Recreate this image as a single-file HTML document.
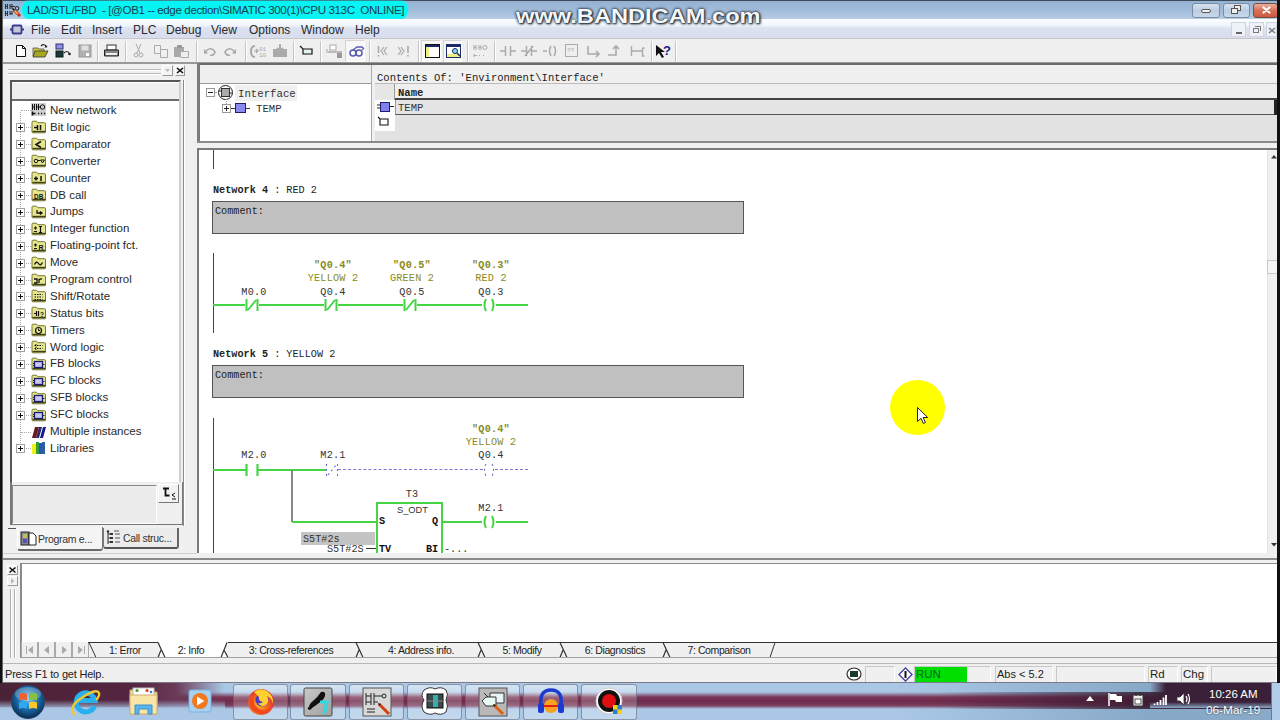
<!DOCTYPE html>
<html><head><meta charset="utf-8"><style>
*{box-sizing:border-box;margin:0;padding:0}
html,body{width:1280px;height:720px;overflow:hidden;background:#f0f0f0;font-family:"Liberation Sans",sans-serif;position:relative}
.a{position:absolute}
.m{font-family:"Liberation Mono",monospace}
.s{font-family:"Liberation Sans",sans-serif;white-space:pre}
.ti{position:absolute;left:50px;font-size:11.5px;color:#222;white-space:pre}
.pl{position:absolute;left:16px;width:9px;height:9px;border:1px solid #999;background:#fff}
.pl:before{content:"";position:absolute;left:1px;top:3px;width:5px;height:1px;background:#000}
.pl:after{content:"";position:absolute;left:3px;top:1px;width:1px;height:5px;background:#000}
.dt{position:absolute;border-top:1px dotted #999}
.nt{position:absolute;font-family:"Liberation Mono",monospace;font-size:10px;color:#222;white-space:pre}
.sy{position:absolute;font-family:"Liberation Mono",monospace;font-size:10px;color:#8c8c1c;white-space:pre;text-align:center;width:80px}
.g{position:absolute;background:#30e030}
.tab{position:absolute;font-size:11px;color:#222;white-space:pre;text-align:center}
svg{position:absolute;overflow:visible}
</style></head><body>
<div class="a" style="left:3px;top:0px;width:1274px;height:19px;background:linear-gradient(#93b0d0,#a4bedc 60%,#b8cce4)"></div>
<div class="a" style="left:3px;top:0px;width:1274px;height:1px;background:#3a4a5a"></div>
<div class="a" style="left:22px;top:1px;width:386px;height:18px;background:#08f4f4;border-radius:8px;box-shadow:0 0 3px #3ff"></div>
<svg style="left:4px;top:2px" width="18" height="16" viewBox="0 0 18 16"><path d="M1.5 2v5M3.5 2v5M1.5 4.5h2M6 2v5M8 2v5M6 4.5h2M8 4.5h3M13 4.5a1.8 1.8 0 1 0 .01 0M1.5 9v5M3.5 9v5M1.5 11.5h2M6 9v4M8 9v4M6 11.5h2" fill="none" stroke="#333" stroke-width="1.1"/><path d="M10 8l6 6" stroke="#c03020" stroke-width="3"/><path d="M10 8l4 4" stroke="#f0c040" stroke-width="1.5"/><path d="M8.5 6.5l2 2" stroke="#111" stroke-width="1.5"/></svg>
<div class="a s" style="left:27px;top:3px;font-size:11.6px;letter-spacing:-0.38px;color:#14404e">LAD/STL/FBD  - [@OB1 -- edge dection\SIMATIC 300(1)\CPU 313C  ONLINE]</div>
<div class="a" style="left:1192px;top:3px;width:28px;height:15px;border:1px solid #7a8ca4;border-radius:3px;background:linear-gradient(#d6e2ef,#bccde2 50%,#c8d9ea)"></div>
<div class="a" style="left:1201px;top:9px;width:10px;height:4px;border:1px solid #555;background:#f4f4f4;border-radius:2px"></div>
<div class="a" style="left:1223px;top:3px;width:27px;height:15px;border:1px solid #7a8ca4;border-radius:3px;background:linear-gradient(#d6e2ef,#bccde2 50%,#c8d9ea)"></div>
<div class="a" style="left:1234px;top:5px;width:7px;height:6px;border:1px solid #555;background:#eee"></div>
<div class="a" style="left:1231px;top:8px;width:7px;height:6px;border:1px solid #555;background:#eee"></div>
<div class="a" style="left:1253px;top:3px;width:25px;height:15px;border:1px solid #7a4a40;border-radius:3px;background:linear-gradient(#e8b0a0,#d87058 50%,#cc5a40)"></div>
<svg style="left:1262px;top:6px" width="9" height="8" viewBox="0 0 9 8"><path d="M1.5 1.5l6 5M7.5 1.5l-6 5" stroke="#fff" stroke-width="2.2" stroke-linecap="round"/></svg>
<div class="a" style="left:3px;top:19px;width:1274px;height:20px;background:linear-gradient(#fafcff,#f2f6fd 30%,#dde2f0 45%,#d8ddee 90%,#e0e2ea)"></div>
<div class="a" style="left:3px;top:38px;width:1274px;height:1px;background:#c4c6cc"></div>
<svg style="left:10px;top:24px" width="14" height="11" viewBox="0 0 14 11"><rect x="2.5" y="1.5" width="9" height="8" rx="1" fill="#c4c8d4" stroke="#3a3a90" stroke-width="1.8"/><path d="M0 5.5h2.5M11.5 5.5h2.5" stroke="#3a3a90" stroke-width="2"/></svg>
<div class="a s" style="left:31px;top:23px;font-size:12px;color:#2a2a2a">File</div>
<div class="a s" style="left:61px;top:23px;font-size:12px;color:#2a2a2a">Edit</div>
<div class="a s" style="left:92px;top:23px;font-size:12px;color:#2a2a2a">Insert</div>
<div class="a s" style="left:133px;top:23px;font-size:12px;color:#2a2a2a">PLC</div>
<div class="a s" style="left:166px;top:23px;font-size:12px;color:#2a2a2a">Debug</div>
<div class="a s" style="left:211px;top:23px;font-size:12px;color:#2a2a2a">View</div>
<div class="a s" style="left:249px;top:23px;font-size:12px;color:#2a2a2a">Options</div>
<div class="a s" style="left:301px;top:23px;font-size:12px;color:#2a2a2a">Window</div>
<div class="a s" style="left:355px;top:23px;font-size:12px;color:#2a2a2a">Help</div>
<div class="a" style="left:1231px;top:22px;width:15px;height:15px;background:#eef2f8;border:1px solid #d0d6e0"></div>
<div class="a" style="left:1236px;top:32px;width:6px;height:2px;background:#666"></div>
<div class="a" style="left:1249px;top:22px;width:15px;height:15px;background:#eef2f8;border:1px solid #d0d6e0"></div>
<div class="a" style="left:1253px;top:28px;width:6px;height:5px;border:1px solid #777"></div>
<div class="a" style="left:1255px;top:26px;width:6px;height:5px;border-top:1px solid #777;border-right:1px solid #777"></div>
<div class="a" style="left:1266px;top:22px;width:11px;height:15px;background:#eef2f8;border:1px solid #d0d6e0"></div>
<svg style="left:1268px;top:27px" width="8" height="7" viewBox="0 0 8 7"><path d="M1 1l6 5M7 1l-6 5" stroke="#777" stroke-width="1.4"/></svg>
<div class="a" style="left:3px;top:39px;width:1274px;height:23px;background:#efefef"></div>
<div class="a" style="left:3px;top:62px;width:1274px;height:2px;background:#9a9a9a"></div>
<div class="a" style="left:97px;top:41px;width:1px;height:21px;background:#c4c4c4;box-shadow:1px 0 0 #fff"></div>
<div class="a" style="left:125px;top:41px;width:1px;height:21px;background:#c4c4c4;box-shadow:1px 0 0 #fff"></div>
<div class="a" style="left:196px;top:41px;width:1px;height:21px;background:#c4c4c4;box-shadow:1px 0 0 #fff"></div>
<div class="a" style="left:245px;top:41px;width:1px;height:21px;background:#c4c4c4;box-shadow:1px 0 0 #fff"></div>
<div class="a" style="left:293px;top:41px;width:1px;height:21px;background:#c4c4c4;box-shadow:1px 0 0 #fff"></div>
<div class="a" style="left:320px;top:41px;width:1px;height:21px;background:#c4c4c4;box-shadow:1px 0 0 #fff"></div>
<div class="a" style="left:369px;top:41px;width:1px;height:21px;background:#c4c4c4;box-shadow:1px 0 0 #fff"></div>
<div class="a" style="left:418px;top:41px;width:1px;height:21px;background:#c4c4c4;box-shadow:1px 0 0 #fff"></div>
<div class="a" style="left:467px;top:41px;width:1px;height:21px;background:#c4c4c4;box-shadow:1px 0 0 #fff"></div>
<div class="a" style="left:494px;top:41px;width:1px;height:21px;background:#c4c4c4;box-shadow:1px 0 0 #fff"></div>
<div class="a" style="left:651px;top:41px;width:1px;height:21px;background:#c4c4c4;box-shadow:1px 0 0 #fff"></div>
<div class="a" style="left:675px;top:41px;width:1px;height:21px;background:#c4c4c4;box-shadow:1px 0 0 #fff"></div>
<div class="a" style="left:345px;top:40px;width:20px;height:22px;background:#f7f7f7;border:1px solid #d4d4d4;border-right-color:#fff;border-bottom-color:#fff"></div>
<div class="a" style="left:421px;top:40px;width:20px;height:22px;background:#f7f7f7;border:1px solid #d4d4d4;border-right-color:#fff;border-bottom-color:#fff"></div>
<div class="a" style="left:443px;top:40px;width:19px;height:22px;background:#f7f7f7;border:1px solid #d4d4d4;border-right-color:#fff;border-bottom-color:#fff"></div>
<svg style="left:15px;top:44px" width="12" height="14" viewBox="0 0 12 14"><path d="M1.5 1.5h6l3 3v8h-9z" fill="#fff" stroke="#111"/><path d="M7.5 1.5v3h3" fill="none" stroke="#111"/></svg>
<svg style="left:32px;top:43px" width="17" height="15" viewBox="0 0 17 15"><path d="M1 5h5l1 1h5v7H1z" fill="#c8c840" stroke="#555" stroke-width="0.8"/><path d="M3 8h13l-3 6H1z" fill="#a8a820" stroke="#333" stroke-width="0.8"/><path d="M9 3q3-3 6 1" fill="none" stroke="#222" stroke-width="1.2"/><path d="M14 2l1 2.5-2.5 0" fill="#222"/></svg>
<svg style="left:55px;top:43px" width="16" height="15" viewBox="0 0 16 15"><rect x="1" y="1" width="7" height="5" fill="#9090e0" stroke="#303070"/><rect x="1" y="8" width="7" height="6" fill="#1a3a3a" stroke="#0a1a1a"/><path d="M9 10q3-3 5 0" fill="none" stroke="#222" stroke-width="1.2"/><circle cx="14.5" cy="11" r="1.3" fill="#222"/></svg>
<svg style="left:78px;top:44px" width="14" height="14" viewBox="0 0 14 14"><rect x="1" y="1" width="12" height="12" fill="#b0b0b0" stroke="#999"/><rect x="3.5" y="1.5" width="7" height="5" fill="#e0e0e0"/><rect x="8" y="9" width="3" height="3" fill="#fff"/></svg>
<svg style="left:103px;top:44px" width="17" height="14" viewBox="0 0 17 14"><rect x="4" y="1" width="9" height="5" fill="#fff" stroke="#333"/><path d="M1.5 6h14v6h-14z" fill="#888" stroke="#222"/><rect x="3" y="9" width="11" height="2" fill="#eee"/></svg>
<svg style="left:133px;top:43px" width="11" height="15" viewBox="0 0 11 15"><path d="M3 1l4 9M8 1l-4 9" stroke="#aaa" stroke-width="1"/><circle cx="3" cy="12" r="2" fill="none" stroke="#aaa"/><circle cx="8" cy="12" r="2" fill="none" stroke="#aaa"/></svg>
<svg style="left:153px;top:44px" width="16" height="14" viewBox="0 0 16 14"><path d="M1.5 1.5h6v8h-6z" fill="#f0f0f0" stroke="#aaa"/><path d="M7.5 5.5h7v8h-7z" fill="#f0f0f0" stroke="#aaa"/></svg>
<svg style="left:173px;top:44px" width="17" height="15" viewBox="0 0 17 15"><path d="M1 3h10v10H1z" fill="#a8a8a8"/><rect x="4" y="1" width="5" height="3" fill="#999"/><path d="M7.5 7.5h8v6h-8z" fill="#eee" stroke="#aaa"/></svg>
<svg style="left:203px;top:47px" width="13" height="9" viewBox="0 0 13 9"><path d="M3 4q5-5 9 1q-1 4-5 3" fill="none" stroke="#aaa" stroke-width="1.6"/><path d="M1 2l0 5 4-1z" fill="#aaa"/></svg>
<svg style="left:224px;top:47px" width="13" height="9" viewBox="0 0 13 9"><path d="M10 4q-5-5-9 1q1 4 5 3" fill="none" stroke="#aaa" stroke-width="1.6"/><path d="M12 2l0 5-4-1z" fill="#aaa"/></svg>
<svg style="left:250px;top:44px" width="17" height="14" viewBox="0 0 17 14"><path d="M5 2q-4 0-4 5.5q0 5.5 4 5.5" fill="none" stroke="#aaa" stroke-width="2"/><path d="M4 7h4M6 5l2 2-2 2" stroke="#aaa" stroke-width="1.2" fill="none"/><text x="9" y="6.5" font-size="6" fill="#aaa" font-family="Liberation Mono">01</text><text x="9" y="13" font-size="6" fill="#aaa" font-family="Liberation Mono">10</text></svg>
<svg style="left:272px;top:43px" width="16" height="15" viewBox="0 0 16 15"><path d="M1 6h4l3 3 3-3h4v8H1z" fill="#aaa"/><path d="M8 1v6M5 5l3 3 3-3" stroke="#aaa" stroke-width="2" fill="none"/></svg>
<svg style="left:299px;top:45px" width="14" height="10" viewBox="0 0 14 10"><path d="M1 1l3 3h9v5H4V4" fill="#e8f4f4" stroke="#111" stroke-width="1.2"/></svg>
<svg style="left:327px;top:44px" width="16" height="15" viewBox="0 0 16 15"><rect x="3" y="1" width="6" height="5" fill="#fff" stroke="#aaa"/><path d="M1 8h14" stroke="#aaa" stroke-width="1.5"/><rect x="10" y="9" width="5" height="5" fill="#999"/><path d="M0 5v4" stroke="#aaa"/></svg>
<svg style="left:349px;top:46px" width="16" height="11" viewBox="0 0 16 11"><circle cx="4" cy="7" r="3" fill="none" stroke="#5858b0" stroke-width="1.5"/><circle cx="10" cy="7" r="3" fill="none" stroke="#5858b0" stroke-width="1.5"/><path d="M4 4l4-3 5 0 2 2M13 4l2-2" fill="none" stroke="#5858b0" stroke-width="1.3"/></svg>
<svg style="left:377px;top:45px" width="11" height="12" viewBox="0 0 11 12"><path d="M1.5 1v7M1.5 10v1.5" stroke="#aaa" stroke-width="1.6"/><path d="M7 2l-3 4 3 4M10 2l-3 4 3 4" fill="none" stroke="#aaa" stroke-width="1.2"/></svg>
<svg style="left:396px;top:45px" width="14" height="12" viewBox="0 0 14 12"><path d="M12 1v7M12 10v1.5" stroke="#aaa" stroke-width="1.6"/><path d="M2 2l3 4-3 4M5 2l3 4-3 4" fill="none" stroke="#aaa" stroke-width="1.2"/></svg>
<svg style="left:425px;top:44px" width="16" height="15" viewBox="0 0 16 15"><rect x="0.5" y="0.5" width="14" height="13" fill="#fff" stroke="#111" stroke-width="1"/><rect x="1" y="1" width="13" height="2" fill="#1a2a6a"/><rect x="1" y="3" width="3" height="10" fill="#f0f080"/></svg>
<svg style="left:446px;top:44px" width="16" height="15" viewBox="0 0 16 15"><rect x="0.5" y="0.5" width="14" height="13" fill="#fff" stroke="#1a2a6a" stroke-width="1"/><rect x="1" y="1" width="13" height="2" fill="#1a2a6a"/><rect x="1" y="10" width="13" height="3" fill="#f0f080"/><circle cx="9" cy="7" r="2.5" fill="#80e0e8" stroke="#1a2a6a"/><path d="M11 9l3 3" stroke="#1a2a6a" stroke-width="1.5"/></svg>
<svg style="left:473px;top:44px" width="15" height="14" viewBox="0 0 15 14"><path d="M1 1v5M3 1v5M1 3.5h2M6 1v5M8 1v5M6 3.5h2M10 3.5a2 2 0 1 0 4 0a2 2 0 1 0 -4 0M1 10v3M1 11.5h3M6 11.5h1M10 11.5h1" fill="none" stroke="#aaa" stroke-width="1"/></svg>
<svg style="left:500px;top:45px" width="16" height="12" viewBox="0 0 16 12"><path d="M0 6h5M11 6h5M5.5 1v10M10.5 1v10" stroke="#aaa" stroke-width="1.5"/></svg>
<svg style="left:521px;top:45px" width="16" height="12" viewBox="0 0 16 12"><path d="M0 6h5M11 6h5M5.5 1v10M10.5 1v10M4 11l8-10" stroke="#aaa" stroke-width="1.5"/></svg>
<svg style="left:543px;top:45px" width="16" height="12" viewBox="0 0 16 12"><path d="M0 6h4" stroke="#aaa" stroke-width="1.5"/><path d="M8 1q-3 5 0 10M11 1q3 5 0 10" fill="none" stroke="#aaa" stroke-width="1.5"/></svg>
<svg style="left:565px;top:44px" width="14" height="14" viewBox="0 0 14 14"><rect x="0.5" y="0.5" width="12" height="12" fill="none" stroke="#aaa"/><text x="2" y="8" font-size="6" fill="#aaa" font-family="Liberation Mono">??</text></svg>
<svg style="left:586px;top:45px" width="15" height="12" viewBox="0 0 15 12"><path d="M2 1v8h11M10 6l3 3-3 3" fill="none" stroke="#aaa" stroke-width="1.6"/></svg>
<svg style="left:608px;top:45px" width="15" height="12" viewBox="0 0 15 12"><path d="M0 10h8v-8M5 4l3-3 3 3" fill="none" stroke="#aaa" stroke-width="1.6"/></svg>
<svg style="left:630px;top:45px" width="16" height="12" viewBox="0 0 16 12"><path d="M1.5 1v10M2 6h10M12.5 3v8h2M12.5 3h2" fill="none" stroke="#aaa" stroke-width="1.4"/></svg>
<svg style="left:655px;top:44px" width="20" height="15" viewBox="0 0 20 15"><path d="M1 1v11l3-3 3 5 2-1-3-5h4z" fill="#111"/><text x="8" y="11" font-size="13" font-weight="bold" fill="#1a1a8a" font-family="Liberation Sans">?</text></svg>
<div class="a" style="left:3px;top:64px;width:194px;height:494px;background:#f0f0f0"></div>
<div class="a" style="left:8px;top:69px;width:153px;height:2px;border-top:1px solid #b8b8b8;border-bottom:1px solid #fff"></div>
<div class="a" style="left:8px;top:73px;width:153px;height:2px;border-top:1px solid #b8b8b8;border-bottom:1px solid #fff"></div>
<div class="a" style="left:162px;top:65px;width:11px;height:11px;background:#f4f4f4;border:1px solid #fff;border-right-color:#999;border-bottom-color:#999"></div>
<svg style="left:165px;top:69px" width="6" height="4" viewBox="0 0 6 4"><path d="M0 0h5l-2.5 3z" fill="#bbb"/></svg>
<div class="a" style="left:175px;top:65px;width:10px;height:11px;background:#f4f4f4;border:1px solid #fff;border-right-color:#999;border-bottom-color:#999"></div>
<svg style="left:176px;top:67px" width="8" height="7" viewBox="0 0 8 7"><path d="M1 1l6 5M7 1l-6 5" stroke="#111" stroke-width="1.6"/></svg>
<div class="a" style="left:183px;top:80px;width:2px;height:446px;background:#8a8a8a;border-right:1px solid #fff"></div>
<div class="a" style="left:10px;top:80px;width:171px;height:403px;border:2px solid #555;border-right-color:#d0d0d0;border-bottom:none;background:#fff"></div>
<div class="a" style="left:12px;top:82px;width:167px;height:19px;background:#eeeeee;border-top:1px solid #fff"></div>
<div class="a" style="left:12px;top:99px;width:167px;height:2px;background:#6a6a6a"></div>
<div class="a" style="left:20px;top:112px;width:1px;height:337px;border-left:1px dotted #aaa"></div>
<div class="a s" style="left:50px;top:104.1px;font-size:11.5px;color:#2a2a2a">New network</div>
<div class="a" style="left:21px;top:110px;width:10px;height:1px;border-top:1px dotted #aaa"></div>
<svg style="left:31px;top:103px" width="16" height="14" viewBox="0 0 16 14"><rect x="0" y="0" width="15" height="13" fill="#cfcfcf"/><path d="M1.5 1v6M3.5 1v6M1.5 4h2M5.5 1v6M7.5 1v6M5.5 4h2M8 4h1.5" fill="none" stroke="#111" stroke-width="1"/><circle cx="11.5" cy="4" r="2.2" fill="none" stroke="#111"/><path d="M1.5 8.5v4M1.5 10.5h3" stroke="#111" stroke-width="1.6"/><path d="M7 10.5h1.2M10 10.5h1.2M13 10.5h1.2" stroke="#111" stroke-width="1.4"/></svg>
<div class="a s" style="left:50px;top:121.0px;font-size:11.5px;color:#2a2a2a">Bit logic</div>
<div class="a" style="left:21px;top:127px;width:10px;height:1px;border-top:1px dotted #aaa"></div>
<div class="a" style="left:16px;top:123px;width:9px;height:9px;border:1px solid #a0a0a0;background:#fff"></div>
<div class="a" style="left:18px;top:127px;width:5px;height:1px;background:#111"></div>
<div class="a" style="left:20px;top:125px;width:1px;height:5px;background:#111"></div>
<svg style="left:31px;top:120px" width="16" height="14" viewBox="0 0 16 14"><path d="M1 3.5V2.2q0-1 1-1h3.5l1.3 1.5h6.7q1 0 1 1V12q0 .8-.8.8H1.8q-.8 0-.8-.8z" fill="#e6e690" stroke="#6a6a20" stroke-width="0.9"/><path d="M1.5 11.5h13" stroke="#40401a" stroke-width="1.4"/><path d="M3 7.5h3M6.5 5v5M9.5 5v5" stroke="#111" stroke-width="1.5"/></svg>
<div class="a s" style="left:50px;top:137.9px;font-size:11.5px;color:#2a2a2a">Comparator</div>
<div class="a" style="left:21px;top:144px;width:10px;height:1px;border-top:1px dotted #aaa"></div>
<div class="a" style="left:16px;top:140px;width:9px;height:9px;border:1px solid #a0a0a0;background:#fff"></div>
<div class="a" style="left:18px;top:144px;width:5px;height:1px;background:#111"></div>
<div class="a" style="left:20px;top:142px;width:1px;height:5px;background:#111"></div>
<svg style="left:31px;top:137px" width="16" height="14" viewBox="0 0 16 14"><path d="M1 3.5V2.2q0-1 1-1h3.5l1.3 1.5h6.7q1 0 1 1V12q0 .8-.8.8H1.8q-.8 0-.8-.8z" fill="#e6e690" stroke="#6a6a20" stroke-width="0.9"/><path d="M1.5 11.5h13" stroke="#40401a" stroke-width="1.4"/><path d="M10 4.5L5 7.5l5 3" fill="none" stroke="#111" stroke-width="1.5"/></svg>
<div class="a s" style="left:50px;top:154.8px;font-size:11.5px;color:#2a2a2a">Converter</div>
<div class="a" style="left:21px;top:161px;width:10px;height:1px;border-top:1px dotted #aaa"></div>
<div class="a" style="left:16px;top:157px;width:9px;height:9px;border:1px solid #a0a0a0;background:#fff"></div>
<div class="a" style="left:18px;top:161px;width:5px;height:1px;background:#111"></div>
<div class="a" style="left:20px;top:159px;width:1px;height:5px;background:#111"></div>
<svg style="left:31px;top:154px" width="16" height="14" viewBox="0 0 16 14"><path d="M1 3.5V2.2q0-1 1-1h3.5l1.3 1.5h6.7q1 0 1 1V12q0 .8-.8.8H1.8q-.8 0-.8-.8z" fill="#e6e690" stroke="#6a6a20" stroke-width="0.9"/><path d="M1.5 11.5h13" stroke="#40401a" stroke-width="1.4"/><circle cx="5" cy="7" r="1.8" fill="none" stroke="#111"/><path d="M7 6.5h2M9.5 6l2 3 2-3z" stroke="#111" fill="none"/></svg>
<div class="a s" style="left:50px;top:171.6px;font-size:11.5px;color:#2a2a2a">Counter</div>
<div class="a" style="left:21px;top:178px;width:10px;height:1px;border-top:1px dotted #aaa"></div>
<div class="a" style="left:16px;top:174px;width:9px;height:9px;border:1px solid #a0a0a0;background:#fff"></div>
<div class="a" style="left:18px;top:178px;width:5px;height:1px;background:#111"></div>
<div class="a" style="left:20px;top:176px;width:1px;height:5px;background:#111"></div>
<svg style="left:31px;top:171px" width="16" height="14" viewBox="0 0 16 14"><path d="M1 3.5V2.2q0-1 1-1h3.5l1.3 1.5h6.7q1 0 1 1V12q0 .8-.8.8H1.8q-.8 0-.8-.8z" fill="#e6e690" stroke="#6a6a20" stroke-width="0.9"/><path d="M1.5 11.5h13" stroke="#40401a" stroke-width="1.4"/><path d="M3 7.5h4M5 5.5v4M10 5v5" stroke="#111" stroke-width="1.5"/></svg>
<div class="a s" style="left:50px;top:188.5px;font-size:11.5px;color:#2a2a2a">DB call</div>
<div class="a" style="left:21px;top:195px;width:10px;height:1px;border-top:1px dotted #aaa"></div>
<div class="a" style="left:16px;top:191px;width:9px;height:9px;border:1px solid #a0a0a0;background:#fff"></div>
<div class="a" style="left:18px;top:195px;width:5px;height:1px;background:#111"></div>
<div class="a" style="left:20px;top:193px;width:1px;height:5px;background:#111"></div>
<svg style="left:31px;top:188px" width="16" height="14" viewBox="0 0 16 14"><path d="M1 3.5V2.2q0-1 1-1h3.5l1.3 1.5h6.7q1 0 1 1V12q0 .8-.8.8H1.8q-.8 0-.8-.8z" fill="#e6e690" stroke="#6a6a20" stroke-width="0.9"/><path d="M1.5 11.5h13" stroke="#40401a" stroke-width="1.4"/><text x="3" y="10.5" font-size="6.5" font-weight="bold" font-family="Liberation Sans" fill="#111">DB</text></svg>
<div class="a s" style="left:50px;top:205.4px;font-size:11.5px;color:#2a2a2a">Jumps</div>
<div class="a" style="left:21px;top:212px;width:10px;height:1px;border-top:1px dotted #aaa"></div>
<div class="a" style="left:16px;top:208px;width:9px;height:9px;border:1px solid #a0a0a0;background:#fff"></div>
<div class="a" style="left:18px;top:212px;width:5px;height:1px;background:#111"></div>
<div class="a" style="left:20px;top:210px;width:1px;height:5px;background:#111"></div>
<svg style="left:31px;top:205px" width="16" height="14" viewBox="0 0 16 14"><path d="M1 3.5V2.2q0-1 1-1h3.5l1.3 1.5h6.7q1 0 1 1V12q0 .8-.8.8H1.8q-.8 0-.8-.8z" fill="#e6e690" stroke="#6a6a20" stroke-width="0.9"/><path d="M1.5 11.5h13" stroke="#40401a" stroke-width="1.4"/><path d="M6 5v3h5M9 6.5l2 1.5-2 1.5" fill="none" stroke="#111" stroke-width="1.3"/></svg>
<div class="a s" style="left:50px;top:222.3px;font-size:11.5px;color:#2a2a2a">Integer function</div>
<div class="a" style="left:21px;top:229px;width:10px;height:1px;border-top:1px dotted #aaa"></div>
<div class="a" style="left:16px;top:225px;width:9px;height:9px;border:1px solid #a0a0a0;background:#fff"></div>
<div class="a" style="left:18px;top:229px;width:5px;height:1px;background:#111"></div>
<div class="a" style="left:20px;top:227px;width:1px;height:5px;background:#111"></div>
<svg style="left:31px;top:222px" width="16" height="14" viewBox="0 0 16 14"><path d="M1 3.5V2.2q0-1 1-1h3.5l1.3 1.5h6.7q1 0 1 1V12q0 .8-.8.8H1.8q-.8 0-.8-.8z" fill="#e6e690" stroke="#6a6a20" stroke-width="0.9"/><path d="M1.5 11.5h13" stroke="#40401a" stroke-width="1.4"/><path d="M3 6h3M4.5 4.5v3M3 9.5h3M9.5 4.5v6M8 4.5h3M8 10.5h3" stroke="#111" stroke-width="1.2"/></svg>
<div class="a s" style="left:50px;top:239.2px;font-size:11.5px;color:#2a2a2a">Floating-point fct.</div>
<div class="a" style="left:21px;top:246px;width:10px;height:1px;border-top:1px dotted #aaa"></div>
<div class="a" style="left:16px;top:242px;width:9px;height:9px;border:1px solid #a0a0a0;background:#fff"></div>
<div class="a" style="left:18px;top:246px;width:5px;height:1px;background:#111"></div>
<div class="a" style="left:20px;top:244px;width:1px;height:5px;background:#111"></div>
<svg style="left:31px;top:239px" width="16" height="14" viewBox="0 0 16 14"><path d="M1 3.5V2.2q0-1 1-1h3.5l1.3 1.5h6.7q1 0 1 1V12q0 .8-.8.8H1.8q-.8 0-.8-.8z" fill="#e6e690" stroke="#6a6a20" stroke-width="0.9"/><path d="M1.5 11.5h13" stroke="#40401a" stroke-width="1.4"/><path d="M3 6h3M4.5 4.5v3M3 9.5h3" stroke="#111" stroke-width="1.2"/><text x="7.5" y="10.5" font-size="7" font-weight="bold" font-family="Liberation Sans" fill="#111">R</text></svg>
<div class="a s" style="left:50px;top:256.1px;font-size:11.5px;color:#2a2a2a">Move</div>
<div class="a" style="left:21px;top:263px;width:10px;height:1px;border-top:1px dotted #aaa"></div>
<div class="a" style="left:16px;top:259px;width:9px;height:9px;border:1px solid #a0a0a0;background:#fff"></div>
<div class="a" style="left:18px;top:263px;width:5px;height:1px;background:#111"></div>
<div class="a" style="left:20px;top:261px;width:1px;height:5px;background:#111"></div>
<svg style="left:31px;top:256px" width="16" height="14" viewBox="0 0 16 14"><path d="M1 3.5V2.2q0-1 1-1h3.5l1.3 1.5h6.7q1 0 1 1V12q0 .8-.8.8H1.8q-.8 0-.8-.8z" fill="#e6e690" stroke="#6a6a20" stroke-width="0.9"/><path d="M1.5 11.5h13" stroke="#40401a" stroke-width="1.4"/><path d="M3.5 8.5q2-4 4-1t4-1" fill="none" stroke="#111" stroke-width="1.3"/></svg>
<div class="a s" style="left:50px;top:273.0px;font-size:11.5px;color:#2a2a2a">Program control</div>
<div class="a" style="left:21px;top:280px;width:10px;height:1px;border-top:1px dotted #aaa"></div>
<div class="a" style="left:16px;top:276px;width:9px;height:9px;border:1px solid #a0a0a0;background:#fff"></div>
<div class="a" style="left:18px;top:280px;width:5px;height:1px;background:#111"></div>
<div class="a" style="left:20px;top:278px;width:1px;height:5px;background:#111"></div>
<svg style="left:31px;top:273px" width="16" height="14" viewBox="0 0 16 14"><path d="M1 3.5V2.2q0-1 1-1h3.5l1.3 1.5h6.7q1 0 1 1V12q0 .8-.8.8H1.8q-.8 0-.8-.8z" fill="#e6e690" stroke="#6a6a20" stroke-width="0.9"/><path d="M1.5 11.5h13" stroke="#40401a" stroke-width="1.4"/><path d="M3 6h3v4H3M8 6v4M8 7q1-1.5 3-1" fill="none" stroke="#111" stroke-width="1.3"/></svg>
<div class="a s" style="left:50px;top:289.8px;font-size:11.5px;color:#2a2a2a">Shift/Rotate</div>
<div class="a" style="left:21px;top:296px;width:10px;height:1px;border-top:1px dotted #aaa"></div>
<div class="a" style="left:16px;top:292px;width:9px;height:9px;border:1px solid #a0a0a0;background:#fff"></div>
<div class="a" style="left:18px;top:296px;width:5px;height:1px;background:#111"></div>
<div class="a" style="left:20px;top:294px;width:1px;height:5px;background:#111"></div>
<svg style="left:31px;top:289px" width="16" height="14" viewBox="0 0 16 14"><path d="M1 3.5V2.2q0-1 1-1h3.5l1.3 1.5h6.7q1 0 1 1V12q0 .8-.8.8H1.8q-.8 0-.8-.8z" fill="#e6e690" stroke="#6a6a20" stroke-width="0.9"/><path d="M1.5 11.5h13" stroke="#40401a" stroke-width="1.4"/><path d="M3.5 5.5h8M3.5 8h8M3.5 10.5h8" stroke="#111" stroke-width="1" stroke-dasharray="1.5 1"/></svg>
<div class="a s" style="left:50px;top:306.7px;font-size:11.5px;color:#2a2a2a">Status bits</div>
<div class="a" style="left:21px;top:313px;width:10px;height:1px;border-top:1px dotted #aaa"></div>
<div class="a" style="left:16px;top:309px;width:9px;height:9px;border:1px solid #a0a0a0;background:#fff"></div>
<div class="a" style="left:18px;top:313px;width:5px;height:1px;background:#111"></div>
<div class="a" style="left:20px;top:311px;width:1px;height:5px;background:#111"></div>
<svg style="left:31px;top:306px" width="16" height="14" viewBox="0 0 16 14"><path d="M1 3.5V2.2q0-1 1-1h3.5l1.3 1.5h6.7q1 0 1 1V12q0 .8-.8.8H1.8q-.8 0-.8-.8z" fill="#e6e690" stroke="#6a6a20" stroke-width="0.9"/><path d="M1.5 11.5h13" stroke="#40401a" stroke-width="1.4"/><path d="M3 7.5h2M5.5 5v5M7.5 5v5" stroke="#111" stroke-width="1.2"/><text x="9" y="10.5" font-size="6.5" font-weight="bold" font-family="Liberation Sans" fill="#111">?</text></svg>
<div class="a s" style="left:50px;top:323.6px;font-size:11.5px;color:#2a2a2a">Timers</div>
<div class="a" style="left:21px;top:330px;width:10px;height:1px;border-top:1px dotted #aaa"></div>
<div class="a" style="left:16px;top:326px;width:9px;height:9px;border:1px solid #a0a0a0;background:#fff"></div>
<div class="a" style="left:18px;top:330px;width:5px;height:1px;background:#111"></div>
<div class="a" style="left:20px;top:328px;width:1px;height:5px;background:#111"></div>
<svg style="left:31px;top:323px" width="16" height="14" viewBox="0 0 16 14"><path d="M1 3.5V2.2q0-1 1-1h3.5l1.3 1.5h6.7q1 0 1 1V12q0 .8-.8.8H1.8q-.8 0-.8-.8z" fill="#e6e690" stroke="#6a6a20" stroke-width="0.9"/><path d="M1.5 11.5h13" stroke="#40401a" stroke-width="1.4"/><circle cx="7.5" cy="7.5" r="3" fill="none" stroke="#111" stroke-width="1.2"/><path d="M7.5 5.5v2h1.5" stroke="#111" fill="none"/></svg>
<div class="a s" style="left:50px;top:340.5px;font-size:11.5px;color:#2a2a2a">Word logic</div>
<div class="a" style="left:21px;top:347px;width:10px;height:1px;border-top:1px dotted #aaa"></div>
<div class="a" style="left:16px;top:343px;width:9px;height:9px;border:1px solid #a0a0a0;background:#fff"></div>
<div class="a" style="left:18px;top:347px;width:5px;height:1px;background:#111"></div>
<div class="a" style="left:20px;top:345px;width:1px;height:5px;background:#111"></div>
<svg style="left:31px;top:340px" width="16" height="14" viewBox="0 0 16 14"><path d="M1 3.5V2.2q0-1 1-1h3.5l1.3 1.5h6.7q1 0 1 1V12q0 .8-.8.8H1.8q-.8 0-.8-.8z" fill="#e6e690" stroke="#6a6a20" stroke-width="0.9"/><path d="M1.5 11.5h13" stroke="#40401a" stroke-width="1.4"/><path d="M3.5 5.5h8M3.5 8.5h8M5 4v6" stroke="#111" stroke-width="1" stroke-dasharray="1.5 1"/></svg>
<div class="a s" style="left:50px;top:357.4px;font-size:11.5px;color:#2a2a2a">FB blocks</div>
<div class="a" style="left:21px;top:364px;width:10px;height:1px;border-top:1px dotted #aaa"></div>
<div class="a" style="left:16px;top:360px;width:9px;height:9px;border:1px solid #a0a0a0;background:#fff"></div>
<div class="a" style="left:18px;top:364px;width:5px;height:1px;background:#111"></div>
<div class="a" style="left:20px;top:362px;width:1px;height:5px;background:#111"></div>
<svg style="left:31px;top:357px" width="16" height="14" viewBox="0 0 16 14"><path d="M1 3.5V2.2q0-1 1-1h3.5l1.3 1.5h6.7q1 0 1 1V12q0 .8-.8.8H1.8q-.8 0-.8-.8z" fill="#e6e690" stroke="#6a6a20" stroke-width="0.9"/><path d="M1.5 11.5h13" stroke="#40401a" stroke-width="1.4"/><rect x="3.5" y="4.5" width="8" height="6" fill="#c8c8f0" stroke="#1a1a70" stroke-width="1.3"/><path d="M2 6.5h1.5M2 8.5h1.5M11.5 7.5h2" stroke="#1a1a70"/></svg>
<div class="a s" style="left:50px;top:374.3px;font-size:11.5px;color:#2a2a2a">FC blocks</div>
<div class="a" style="left:21px;top:381px;width:10px;height:1px;border-top:1px dotted #aaa"></div>
<div class="a" style="left:16px;top:377px;width:9px;height:9px;border:1px solid #a0a0a0;background:#fff"></div>
<div class="a" style="left:18px;top:381px;width:5px;height:1px;background:#111"></div>
<div class="a" style="left:20px;top:379px;width:1px;height:5px;background:#111"></div>
<svg style="left:31px;top:374px" width="16" height="14" viewBox="0 0 16 14"><path d="M1 3.5V2.2q0-1 1-1h3.5l1.3 1.5h6.7q1 0 1 1V12q0 .8-.8.8H1.8q-.8 0-.8-.8z" fill="#e6e690" stroke="#6a6a20" stroke-width="0.9"/><path d="M1.5 11.5h13" stroke="#40401a" stroke-width="1.4"/><rect x="3.5" y="4.5" width="8" height="6" fill="#c8c8f0" stroke="#1a1a70" stroke-width="1.3"/><path d="M2 6.5h1.5M2 8.5h1.5M11.5 7.5h2" stroke="#1a1a70"/></svg>
<div class="a s" style="left:50px;top:391.1px;font-size:11.5px;color:#2a2a2a">SFB blocks</div>
<div class="a" style="left:21px;top:398px;width:10px;height:1px;border-top:1px dotted #aaa"></div>
<div class="a" style="left:16px;top:394px;width:9px;height:9px;border:1px solid #a0a0a0;background:#fff"></div>
<div class="a" style="left:18px;top:398px;width:5px;height:1px;background:#111"></div>
<div class="a" style="left:20px;top:396px;width:1px;height:5px;background:#111"></div>
<svg style="left:31px;top:391px" width="16" height="14" viewBox="0 0 16 14"><path d="M1 3.5V2.2q0-1 1-1h3.5l1.3 1.5h6.7q1 0 1 1V12q0 .8-.8.8H1.8q-.8 0-.8-.8z" fill="#e6e690" stroke="#6a6a20" stroke-width="0.9"/><path d="M1.5 11.5h13" stroke="#40401a" stroke-width="1.4"/><rect x="3.5" y="4.5" width="8" height="6" fill="#c8c8f0" stroke="#1a1a70" stroke-width="1.3"/><path d="M2 6.5h1.5M2 8.5h1.5M11.5 7.5h2" stroke="#1a1a70"/></svg>
<div class="a s" style="left:50px;top:408.0px;font-size:11.5px;color:#2a2a2a">SFC blocks</div>
<div class="a" style="left:21px;top:415px;width:10px;height:1px;border-top:1px dotted #aaa"></div>
<div class="a" style="left:16px;top:411px;width:9px;height:9px;border:1px solid #a0a0a0;background:#fff"></div>
<div class="a" style="left:18px;top:415px;width:5px;height:1px;background:#111"></div>
<div class="a" style="left:20px;top:413px;width:1px;height:5px;background:#111"></div>
<svg style="left:31px;top:408px" width="16" height="14" viewBox="0 0 16 14"><path d="M1 3.5V2.2q0-1 1-1h3.5l1.3 1.5h6.7q1 0 1 1V12q0 .8-.8.8H1.8q-.8 0-.8-.8z" fill="#e6e690" stroke="#6a6a20" stroke-width="0.9"/><path d="M1.5 11.5h13" stroke="#40401a" stroke-width="1.4"/><rect x="3.5" y="4.5" width="8" height="6" fill="#c8c8f0" stroke="#1a1a70" stroke-width="1.3"/><path d="M2 6.5h1.5M2 8.5h1.5M11.5 7.5h2" stroke="#1a1a70"/></svg>
<div class="a s" style="left:50px;top:424.9px;font-size:11.5px;color:#2a2a2a">Multiple instances</div>
<div class="a" style="left:21px;top:432px;width:10px;height:1px;border-top:1px dotted #aaa"></div>
<svg style="left:31px;top:425px" width="16" height="14" viewBox="0 0 16 14"><path d="M1 13l3-11h4l-3 11z" fill="#6a1a1a"/><path d="M5 13l3-11h3l-3 11z" fill="#2a2a6a"/><path d="M9 13l3-11h3l-3 11z" fill="#1a1a8a"/></svg>
<div class="a s" style="left:50px;top:441.8px;font-size:11.5px;color:#2a2a2a">Libraries</div>
<div class="a" style="left:21px;top:448px;width:10px;height:1px;border-top:1px dotted #aaa"></div>
<div class="a" style="left:16px;top:444px;width:9px;height:9px;border:1px solid #a0a0a0;background:#fff"></div>
<div class="a" style="left:18px;top:448px;width:5px;height:1px;background:#111"></div>
<div class="a" style="left:20px;top:446px;width:1px;height:5px;background:#111"></div>
<svg style="left:31px;top:441px" width="16" height="14" viewBox="0 0 16 14"><rect x="1" y="3" width="4" height="10" fill="#f0f020"/><rect x="5" y="1" width="3" height="12" fill="#30a030"/><rect x="8" y="2" width="3" height="11" fill="#3050c0"/><rect x="11" y="1" width="3" height="12" fill="#2a60a0"/></svg>
<div class="a" style="left:10px;top:482px;width:173px;height:43px;background:#f0f0f0;border-left:2px solid #777;border-bottom:1px solid #777;border-right:1px solid #777"></div>
<div class="a" style="left:12px;top:485px;width:145px;height:39px;background:#ececec;border:1px solid #888;border-right-color:#fff;border-bottom-color:#fff"></div>
<div class="a" style="left:158px;top:484px;width:21px;height:19px;background:#f2f2f2;border:1px solid #fff;border-right-color:#777;border-bottom-color:#777"></div>
<svg style="left:162px;top:487px" width="15" height="13" viewBox="0 0 15 13"><path d="M1 1.5h6M3.5 1.5v7h4" fill="none" stroke="#111" stroke-width="1.8"/><path d="M13 6l-3 2 3 2M10 12h4" fill="none" stroke="#111" stroke-width="1"/></svg>
<div class="a" style="left:8px;top:528px;width:8px;height:1px;background:#555"></div>
<div class="a" style="left:17px;top:527px;width:86px;height:24px;background:#f4f4f4;border-left:1px solid #fff;border-bottom:2px solid #6a6a6a;border-right:1px solid #777;border-radius:0 0 3px 3px"></div>
<div class="a" style="left:103px;top:528px;width:76px;height:21px;background:#ececec;border-bottom:2px solid #555;border-right:2px solid #666;border-left:1px solid #777;border-radius:0 0 3px 3px"></div>
<svg style="left:20px;top:531px" width="17" height="16" viewBox="0 0 17 16"><rect x="1" y="1" width="8" height="13" fill="#888" stroke="#222"/><rect x="3" y="3" width="4" height="4" fill="#c0c060"/><rect x="3" y="8" width="4" height="4" fill="#5050c0"/><path d="M9 2h4l3 3v9H9z" fill="#fff" stroke="#222"/></svg>
<div class="a s" style="left:38px;top:533px;font-size:10.5px;letter-spacing:-0.3px;color:#333">Program e...</div>
<svg style="left:106px;top:530px" width="16" height="16" viewBox="0 0 16 16"><path d="M2 1v13M2 4h3M2 8h3M2 12h3" stroke="#333" stroke-width="1" fill="none"/><circle cx="2" cy="1.5" r="1.3" fill="#333"/><rect x="4" y="3" width="3" height="2" fill="#333"/><rect x="4" y="7" width="3" height="2" fill="#333"/><rect x="4" y="11" width="3" height="2" fill="#333"/><path d="M9 4h5M9 8h5M9 12h5M8 1h5" stroke="#555" stroke-width="1"/></svg>
<div class="a s" style="left:123px;top:532px;font-size:10.5px;letter-spacing:-0.3px;color:#333">Call struc...</div>
<div class="a" style="left:197px;top:63px;width:1080px;height:2px;background:#6a6a6a"></div>
<div class="a" style="left:197px;top:63px;width:3px;height:79px;background:#7a7a7a"></div>
<div class="a" style="left:200px;top:65px;width:171px;height:77px;background:#fff"></div>
<div class="a" style="left:200px;top:65px;width:171px;height:19px;background:#efefef;border-bottom:1px solid #9a9a9a"></div>
<div class="a" style="left:371px;top:65px;width:4px;height:77px;background:#f0f0f0;border-left:1px solid #aaa"></div>
<div class="a" style="left:375px;top:65px;width:902px;height:19px;background:#f0f0f0;border-bottom:1px solid #bbb"></div>
<div class="a m" style="left:377px;top:72px;font-size:10.55px;color:#222">Contents Of: 'Environment\Interface'</div>
<div class="a" style="left:375px;top:84px;width:902px;height:16px;background:#efefef;border-bottom:2px solid #444"></div>
<div class="a" style="left:375px;top:84px;width:20px;height:16px;background:#e6e6e6;border-right:1px solid #999"></div>
<div class="a m" style="left:398px;top:87px;font-size:10.55px;color:#222;font-weight:bold">Name</div>
<div class="a" style="left:375px;top:100px;width:902px;height:41px;background:#e2e2e2"></div>
<div class="a" style="left:375px;top:100px;width:20px;height:31px;background:#fff"></div>
<div class="a" style="left:395px;top:100px;width:882px;height:15px;background:#e4e4e4;border-bottom:1px solid #555;border-left:1px solid #999"></div>
<div class="a m" style="left:398px;top:102px;font-size:10.55px;color:#333">TEMP</div>
<div class="a" style="left:1274px;top:100px;width:3px;height:15px;background:#222"></div>
<svg style="left:377px;top:101px" width="17" height="12" viewBox="0 0 17 12"><path d="M0 4h3M0 7h3M13 5.5h4" stroke="#222" stroke-width="1"/><rect x="3.5" y="1.5" width="9" height="9" fill="#8080f0" stroke="#20206a"/></svg>
<svg style="left:377px;top:116px" width="13" height="10" viewBox="0 0 13 10"><path d="M1 1l2 2h8v6H3V3" fill="#fff" stroke="#111" stroke-width="1.1"/></svg>
<div class="a" style="left:206px;top:88px;width:9px;height:9px;border:1px solid #999;background:#fff"></div>
<div class="a" style="left:208px;top:92px;width:5px;height:1px;background:#222"></div>
<div class="a" style="left:215px;top:92px;width:4px;height:1px;border-top:1px dotted #999"></div>
<svg style="left:217px;top:85px" width="17" height="15" viewBox="0 0 17 15"><circle cx="8.5" cy="7.5" r="7" fill="#fff" stroke="#222" stroke-width="1"/><rect x="4.5" y="3.5" width="8" height="8" fill="#aaa" stroke="#333"/><path d="M2 6h2.5M12.5 8h3" stroke="#222"/></svg>
<div class="a" style="left:235px;top:85px;width:62px;height:16px;background:#f0f0f0"></div>
<div class="a m" style="left:238px;top:88px;font-size:10.7px;color:#333">Interface</div>
<div class="a" style="left:226px;top:99px;width:1px;height:9px;border-left:1px dotted #999"></div>
<div class="a" style="left:222px;top:104px;width:9px;height:9px;border:1px solid #999;background:#fff"></div>
<div class="a" style="left:224px;top:108px;width:5px;height:1px;background:#222"></div>
<div class="a" style="left:226px;top:106px;width:1px;height:5px;background:#222"></div>
<svg style="left:231px;top:102px" width="20" height="12" viewBox="0 0 20 12"><path d="M0 6.5h4M15 6.5h4" stroke="#333"/><rect x="4.5" y="1.5" width="10" height="9" fill="#8a8af0" stroke="#20206a"/></svg>
<div class="a m" style="left:256px;top:103px;font-size:10.7px;color:#333">TEMP</div>
<div class="a" style="left:197px;top:141px;width:1080px;height:2px;background:#8a8a8a"></div>
<div class="a" style="left:197px;top:143px;width:1080px;height:5px;background:#f0f0f0"></div>
<div class="a" style="left:197px;top:148px;width:1080px;height:2px;background:#7a7a7a"></div>
<div class="a" style="left:197px;top:148px;width:2px;height:406px;background:#7a7a7a"></div>
<div class="a" style="left:199px;top:150px;width:1068px;height:403px;background:#fff"></div>
<div class="a" style="left:1267px;top:150px;width:10px;height:403px;background:#f0f0f0;border-left:1px solid #e4e4e4"></div>
<svg style="left:1271px;top:155px" width="6" height="4" viewBox="0 0 6 4"><path d="M0 3.5h6L3 0z" fill="#333"/></svg>
<svg style="left:1271px;top:543px" width="6" height="4" viewBox="0 0 6 4"><path d="M0 0h6L3 3.5z" fill="#333"/></svg>
<div class="a" style="left:1267px;top:260px;width:10px;height:14px;background:#f6f6f6;border:1px solid #c8c8c8;border-right:none"></div>
<div class="a" style="left:213px;top:150px;width:1px;height:19px;background:#444"></div>
<div class="a m" style="left:213px;top:185px;font-size:10.2px;color:#222;white-space:pre"><b>Network 4</b> : RED 2</div>
<div class="a" style="left:212px;top:201px;width:532px;height:33px;background:#c0c0c0;border:1px solid #555"></div>
<div class="a m" style="left:215px;top:206px;font-size:10.2px;color:#222">Comment:</div>
<div class="a m" style="left:213px;top:349px;font-size:10.2px;color:#222;white-space:pre"><b>Network 5</b> : YELLOW 2</div>
<div class="a" style="left:212px;top:365px;width:532px;height:33px;background:#c0c0c0;border:1px solid #555"></div>
<div class="a m" style="left:215px;top:370px;font-size:10.2px;color:#222">Comment:</div>
<div class="a" style="left:213px;top:253px;width:1px;height:80px;background:#444"></div>
<div class="a" style="left:213px;top:418px;width:1px;height:135px;background:#444"></div>
<div class="a" style="left:213px;top:304px;width:32px;height:2px;background:#44d444"></div>
<div class="a" style="left:259px;top:304px;width:65px;height:2px;background:#44d444"></div>
<div class="a" style="left:338px;top:304px;width:65px;height:2px;background:#44d444"></div>
<div class="a" style="left:417px;top:304px;width:65px;height:2px;background:#44d444"></div>
<div class="a" style="left:496px;top:304px;width:32px;height:2px;background:#44d444"></div>
<div class="a" style="left:259px;top:304px;width:65px;height:2px;background:#44d444"></div>
<svg style="left:245px;top:298px" width="14" height="14" viewBox="0 0 14 14"><path d="M1.5 1v12M12.5 1v12M3 12L11 2" stroke="#44d444" stroke-width="2" fill="none"/></svg>
<svg style="left:324px;top:298px" width="14" height="14" viewBox="0 0 14 14"><path d="M1.5 1v12M12.5 1v12M3 12L11 2" stroke="#44d444" stroke-width="2" fill="none"/></svg>
<svg style="left:403px;top:298px" width="14" height="14" viewBox="0 0 14 14"><path d="M1.5 1v12M12.5 1v12M3 12L11 2" stroke="#44d444" stroke-width="2" fill="none"/></svg>
<svg style="left:482px;top:298px" width="14" height="14" viewBox="0 0 14 14"><path d="M4 1q-3 6 0 12M10 1q3 6 0 12" stroke="#44d444" stroke-width="2" fill="none"/></svg>
<div class="a m" style="left:204px;top:287px;width:100px;text-align:center;font-size:10.2px;letter-spacing:0.2px;white-space:pre;color:#333">M0.0</div>
<div class="a m" style="left:283px;top:260px;width:100px;text-align:center;font-size:10.2px;letter-spacing:0.2px;white-space:pre;color:#8a8a1a;font-weight:bold">"Q0.4"</div>
<div class="a m" style="left:283px;top:273px;width:100px;text-align:center;font-size:10.2px;letter-spacing:0.2px;white-space:pre;color:#8a8a1a">YELLOW 2</div>
<div class="a m" style="left:283px;top:287px;width:100px;text-align:center;font-size:10.2px;letter-spacing:0.2px;white-space:pre;color:#333">Q0.4</div>
<div class="a m" style="left:362px;top:260px;width:100px;text-align:center;font-size:10.2px;letter-spacing:0.2px;white-space:pre;color:#8a8a1a;font-weight:bold">"Q0.5"</div>
<div class="a m" style="left:362px;top:273px;width:100px;text-align:center;font-size:10.2px;letter-spacing:0.2px;white-space:pre;color:#8a8a1a">GREEN 2</div>
<div class="a m" style="left:362px;top:287px;width:100px;text-align:center;font-size:10.2px;letter-spacing:0.2px;white-space:pre;color:#333">Q0.5</div>
<div class="a m" style="left:441px;top:260px;width:100px;text-align:center;font-size:10.2px;letter-spacing:0.2px;white-space:pre;color:#8a8a1a;font-weight:bold">"Q0.3"</div>
<div class="a m" style="left:441px;top:273px;width:100px;text-align:center;font-size:10.2px;letter-spacing:0.2px;white-space:pre;color:#8a8a1a">RED 2</div>
<div class="a m" style="left:441px;top:287px;width:100px;text-align:center;font-size:10.2px;letter-spacing:0.2px;white-space:pre;color:#333">Q0.3</div>
<div class="a" style="left:213px;top:469px;width:33px;height:2px;background:#44d444"></div>
<div class="a" style="left:258px;top:469px;width:68px;height:2px;background:#44d444"></div>
<svg style="left:245px;top:463px" width="14" height="14" viewBox="0 0 14 14"><path d="M1.5 1v12M12.5 1v12" stroke="#44d444" stroke-width="2.2" fill="none"/></svg>
<svg style="left:325px;top:463px" width="14" height="14" viewBox="0 0 14 14"><path d="M1.5 1v12M12.5 1v12M3 12L11 2" stroke="#7070cc" stroke-width="1.1" stroke-dasharray="2 3" fill="none"/></svg>
<div class="a" style="left:338px;top:469px;width:145px;height:1px;border-top:1px dashed #7a7ad4"></div>
<div class="a" style="left:495px;top:469px;width:33px;height:1px;border-top:1px dashed #7a7ad4"></div>
<svg style="left:482px;top:463px" width="14" height="14" viewBox="0 0 14 14"><path d="M4 1q-3 6 0 12M10 1q3 6 0 12" stroke="#7070cc" stroke-width="1.1" stroke-dasharray="2 3" fill="none"/></svg>
<div class="a m" style="left:204px;top:450px;width:100px;text-align:center;font-size:10.2px;letter-spacing:0.2px;white-space:pre;color:#333">M2.0</div>
<div class="a m" style="left:283px;top:450px;width:100px;text-align:center;font-size:10.2px;letter-spacing:0.2px;white-space:pre;color:#333">M2.1</div>
<div class="a m" style="left:441px;top:424px;width:100px;text-align:center;font-size:10.2px;letter-spacing:0.2px;white-space:pre;color:#8a8a1a;font-weight:bold">"Q0.4"</div>
<div class="a m" style="left:441px;top:437px;width:100px;text-align:center;font-size:10.2px;letter-spacing:0.2px;white-space:pre;color:#8a8a1a">YELLOW 2</div>
<div class="a m" style="left:441px;top:450px;width:100px;text-align:center;font-size:10.2px;letter-spacing:0.2px;white-space:pre;color:#333">Q0.4</div>
<div class="a" style="left:291px;top:470px;width:2px;height:52px;background:#888"></div>
<div class="a" style="left:292px;top:521px;width:85px;height:2px;background:#44d444"></div>
<div class="a" style="left:376px;top:502px;width:67px;height:60px;border:2.5px solid #44d444;border-bottom:none"></div>
<div class="a m" style="left:362px;top:489px;width:100px;text-align:center;font-size:10.2px;letter-spacing:0.2px;white-space:pre;color:#333">T3</div>
<div class="a s" style="left:397px;top:505px;font-size:9.3px;color:#333">S_ODT</div>
<div class="a m" style="left:379px;top:516px;font-size:10.2px;color:#111;font-weight:bold">S</div>
<div class="a m" style="left:432px;top:516px;font-size:10.2px;color:#111;font-weight:bold">Q</div>
<div class="a" style="left:443px;top:521px;width:39px;height:2px;background:#44d444"></div>
<div class="a" style="left:496px;top:521px;width:32px;height:2px;background:#44d444"></div>
<svg style="left:482px;top:515px" width="14" height="14" viewBox="0 0 14 14"><path d="M4 1q-3 6 0 12M10 1q3 6 0 12" stroke="#44d444" stroke-width="2" fill="none"/></svg>
<div class="a m" style="left:441px;top:503px;width:100px;text-align:center;font-size:10.2px;letter-spacing:0.2px;white-space:pre;color:#333">M2.1</div>
<div class="a" style="left:301px;top:532px;width:74px;height:13px;background:#c4c4c4"></div>
<div class="a m" style="left:303px;top:534px;font-size:10.2px;color:#333">S5T#2s</div>
<div class="a m" style="left:327px;top:544px;font-size:10.2px;color:#333">S5T#2S</div>
<div class="a" style="left:366px;top:548px;width:10px;height:1px;background:#333"></div>
<div class="a m" style="left:379px;top:544px;font-size:10.2px;color:#111;font-weight:bold">TV</div>
<div class="a m" style="left:426px;top:544px;font-size:10.2px;color:#111;font-weight:bold">BI</div>
<div class="a m" style="left:444px;top:544px;font-size:10.2px;color:#333">-...</div>
<div class="a" style="left:197px;top:553px;width:1080px;height:5px;background:#f0f0f0"></div>
<div class="a" style="left:3px;top:553px;width:194px;height:1px;background:#d0d0d0"></div>
<div class="a" style="left:3px;top:558px;width:1274px;height:2px;background:#8a8a8a"></div>
<div class="a" style="left:3px;top:560px;width:1274px;height:3px;background:#f0f0f0"></div>
<div class="a" style="left:890px;top:380px;width:55px;height:55px;background:#ffff00;border-radius:50%"></div>
<svg style="left:917px;top:407px" width="12" height="19" viewBox="0 0 12 19"><path d="M0.5 0.5v14l3.5-3.2 2.4 5.2 2-1-2.3-5h4.6z" fill="#fff" stroke="#222" stroke-width="1"/></svg>
<div class="a" style="left:3px;top:565px;width:1274px;height:118px;background:#f0f0f0"></div>
<div class="a" style="left:20px;top:563px;width:1257px;height:79px;background:#fff;border-left:2px solid #8a8a8a;border-top:1px solid #8a8a8a"></div>
<div class="a" style="left:7px;top:565px;width:11px;height:10px;background:#f4f4f4;border:1px solid #fff;border-right-color:#999;border-bottom-color:#999"></div>
<svg style="left:9px;top:567px" width="7" height="6" viewBox="0 0 7 6"><path d="M0.5 0.5l6 5M6.5 0.5l-6 5" stroke="#111" stroke-width="1.5"/></svg>
<div class="a" style="left:7px;top:576px;width:11px;height:10px;background:#f4f4f4;border:1px solid #fff;border-right-color:#999;border-bottom-color:#999"></div>
<svg style="left:11px;top:578px" width="4" height="6" viewBox="0 0 4 6"><path d="M0 0v6l3.5-3z" fill="#bbb"/></svg>
<div class="a" style="left:10px;top:589px;width:2px;height:69px;border-left:1px solid #b0b0b0;border-right:1px solid #fff"></div>
<div class="a" style="left:14px;top:589px;width:2px;height:69px;border-left:1px solid #b0b0b0;border-right:1px solid #fff"></div>
<div class="a" style="left:20px;top:642px;width:1257px;height:16px;background:#f0f0f0;border-left:2px solid #8a8a8a"></div>
<div class="a" style="left:21px;top:642px;width:17px;height:16px;background:#f0f0f0;border:1px solid #aaa;border-top:none"></div>
<div class="a" style="left:38px;top:642px;width:17px;height:16px;background:#f0f0f0;border:1px solid #aaa;border-top:none"></div>
<div class="a" style="left:55px;top:642px;width:17px;height:16px;background:#f0f0f0;border:1px solid #aaa;border-top:none"></div>
<div class="a" style="left:72px;top:642px;width:17px;height:16px;background:#f0f0f0;border:1px solid #aaa;border-top:none"></div>
<svg style="left:26px;top:646px" width="8" height="8" viewBox="0 0 8 8"><path d="M0.5 0v8" stroke="#aaa"/><path d="M7 0v8L2 4z" fill="#aaa"/></svg>
<svg style="left:43px;top:646px" width="8" height="8" viewBox="0 0 8 8"><path d="M6 0v8L1 4z" fill="#aaa"/></svg>
<svg style="left:60px;top:646px" width="8" height="8" viewBox="0 0 8 8"><path d="M2 0v8l5-4z" fill="#aaa"/></svg>
<svg style="left:77px;top:646px" width="8" height="8" viewBox="0 0 8 8"><path d="M7.5 0v8" stroke="#aaa"/><path d="M1 0v8l5-4z" fill="#aaa"/></svg>
<svg style="left:0px;top:642px" width="800" height="17" viewBox="0 0 800 17"><path d="M88 0.5H158M228 0.5H776" stroke="#333" stroke-width="1"/><path d="M88 15.5H776" stroke="#555" stroke-width="1"/><rect x="160" y="0" width="66" height="16" fill="#fff"/><path d="M89 0.5L96 15.5" stroke="#333" fill="none"/><path d="M158 0.5L165 15.5M161 8L158 15.5" stroke="#333" stroke-width="1.2" fill="none"/><path d="M356 0.5L363 15.5M359 8L356 15.5" stroke="#333" stroke-width="1.2" fill="none"/><path d="M478 0.5L485 15.5M481 8L478 15.5" stroke="#333" stroke-width="1.2" fill="none"/><path d="M560 0.5L567 15.5M563 8L560 15.5" stroke="#333" stroke-width="1.2" fill="none"/><path d="M663 0.5L670 15.5M666 8L663 15.5" stroke="#333" stroke-width="1.2" fill="none"/><path d="M221 15.5L227 0.5M224 8L228 15.5" stroke="#333" stroke-width="1.2" fill="none"/><path d="M775 0.5L770 15.5" stroke="#333" fill="none"/></svg>
<div class="a" style="left:160px;top:657px;width:66px;height:1px;background:#fff"></div>
<div class="a s" style="left:55px;top:644px;width:140px;text-align:center;font-size:10.5px;color:#222;letter-spacing:-0.4px">1: Error</div>
<div class="a s" style="left:121px;top:644px;width:140px;text-align:center;font-size:10.5px;color:#222;letter-spacing:-0.4px">2: Info</div>
<div class="a s" style="left:221px;top:644px;width:140px;text-align:center;font-size:10.5px;color:#222;letter-spacing:-0.4px">3: Cross-references</div>
<div class="a s" style="left:351px;top:644px;width:140px;text-align:center;font-size:10.5px;color:#222;letter-spacing:-0.4px">4: Address info.</div>
<div class="a s" style="left:452px;top:644px;width:140px;text-align:center;font-size:10.5px;color:#222;letter-spacing:-0.4px">5: Modify</div>
<div class="a s" style="left:545px;top:644px;width:140px;text-align:center;font-size:10.5px;color:#222;letter-spacing:-0.4px">6: Diagnostics</div>
<div class="a s" style="left:649px;top:644px;width:140px;text-align:center;font-size:10.5px;color:#222;letter-spacing:-0.4px">7: Comparison</div>
<div class="a" style="left:20px;top:657px;width:1257px;height:1px;background:#a0a0a0"></div>
<div class="a" style="left:3px;top:663px;width:1274px;height:1px;background:#b8b8b8"></div>
<div class="a" style="left:776px;top:642px;width:501px;height:1px;background:#333"></div>
<div class="a s" style="left:5px;top:668px;font-size:11px;letter-spacing:-0.2px;color:#222">Press F1 to get Help.</div>
<div class="a" style="left:865px;top:666px;width:30px;height:17px;border:1px solid #c8c8c8;border-right-color:#fff;border-bottom-color:#fff"></div>
<div class="a" style="left:914px;top:666px;width:77px;height:17px;border:1px solid #c8c8c8;border-right-color:#fff;border-bottom-color:#fff"></div>
<div class="a" style="left:995px;top:666px;width:58px;height:17px;border:1px solid #c8c8c8;border-right-color:#fff;border-bottom-color:#fff"></div>
<div class="a" style="left:1056px;top:666px;width:89px;height:17px;border:1px solid #c8c8c8;border-right-color:#fff;border-bottom-color:#fff"></div>
<div class="a" style="left:1148px;top:666px;width:30px;height:17px;border:1px solid #c8c8c8;border-right-color:#fff;border-bottom-color:#fff"></div>
<div class="a" style="left:1181px;top:666px;width:27px;height:17px;border:1px solid #c8c8c8;border-right-color:#fff;border-bottom-color:#fff"></div>
<div class="a" style="left:1211px;top:666px;width:66px;height:17px;border:1px solid #c8c8c8;border-right-color:#fff;border-bottom-color:#fff"></div>
<div class="a" style="left:915px;top:667px;width:52px;height:15px;background:#00e000"></div>
<div class="a s" style="left:916px;top:668px;font-size:11.5px;color:#063">RUN</div>
<div class="a s" style="left:997px;top:668px;font-size:11px;color:#222">Abs &lt; 5.2</div>
<div class="a s" style="left:1150px;top:668px;font-size:11.5px;color:#222">Rd</div>
<div class="a s" style="left:1183px;top:668px;font-size:11.5px;color:#222">Chg</div>
<svg style="left:898px;top:667px" width="15" height="15" viewBox="0 0 15 15"><path d="M7.5 1L14 7.5 7.5 14 1 7.5z" fill="#fff" stroke="#4040a0" stroke-width="1.3"/><path d="M7.5 4v7" stroke="#111" stroke-width="2"/></svg>
<svg style="left:846px;top:667px" width="16" height="14" viewBox="0 0 16 14"><ellipse cx="8" cy="7" rx="7" ry="6" fill="#fff" stroke="#333" stroke-width="1.2"/><rect x="4" y="4" width="8" height="6" fill="#1a3a2a"/></svg>
<div class="a" style="left:0px;top:683px;width:1280px;height:37px;background:linear-gradient(90deg,#aac8e6,#aac8e6 70%,#88a8c8 90%,#8aaaca)"></div>
<div class="a" style="left:0px;top:692px;width:1280px;height:17px;background:linear-gradient(rgba(120,50,80,0),#7a3454 30%,#6e2a4a 55%,#7a4060 80%,rgba(130,80,110,0))"></div>
<div class="a" style="left:940px;top:692px;width:340px;height:17px;background:linear-gradient(90deg,rgba(40,20,40,0),rgba(50,25,45,0.8) 60%,rgba(50,25,45,0.9))"></div>
<div class="a" style="left:0px;top:683px;width:225px;height:24px;background:linear-gradient(90deg,#4a2236,#552540 60%,#6a3a58 78%,rgba(140,110,140,0))"></div>
<div class="a" style="left:0px;top:700px;width:225px;height:10px;background:linear-gradient(rgba(170,198,228,0),#aac6e4)"></div>
<div class="a" style="left:1150px;top:683px;width:130px;height:23px;background:linear-gradient(90deg,rgba(58,32,56,0),#3a2038 12%,#3a2038)"></div>
<div class="a" style="left:1150px;top:702px;width:130px;height:6px;background:linear-gradient(rgba(58,32,56,0.0),rgba(138,168,200,1))"></div>
<div class="a" style="left:1271px;top:683px;width:9px;height:37px;background:#b0cce8;border-left:1px solid #6a7a90"></div>
<div class="a" style="left:0px;top:682px;width:1280px;height:1px;background:#7a7a86"></div>
<div class="a" style="left:233px;top:684px;width:55px;height:36px;border:1px solid rgba(80,90,110,0.55);border-radius:3px;background:linear-gradient(rgba(255,255,255,0.5),rgba(255,255,255,0.2) 45%,rgba(255,255,255,0.3))"></div>
<div class="a" style="left:290px;top:684px;width:56px;height:36px;border:1px solid rgba(80,90,110,0.55);border-radius:3px;background:linear-gradient(rgba(255,255,255,0.5),rgba(255,255,255,0.2) 45%,rgba(255,255,255,0.3))"></div>
<div class="a" style="left:349px;top:684px;width:55px;height:36px;border:1px solid rgba(80,90,110,0.55);border-radius:3px;background:linear-gradient(rgba(255,255,255,0.5),rgba(255,255,255,0.2) 45%,rgba(255,255,255,0.3))"></div>
<div class="a" style="left:407px;top:684px;width:55px;height:36px;border:1px solid rgba(80,90,110,0.55);border-radius:3px;background:linear-gradient(rgba(255,255,255,0.5),rgba(255,255,255,0.2) 45%,rgba(255,255,255,0.3))"></div>
<div class="a" style="left:465px;top:684px;width:55px;height:36px;border:1px solid rgba(80,90,110,0.55);border-radius:3px;background:linear-gradient(rgba(255,255,255,0.5),rgba(255,255,255,0.2) 45%,rgba(255,255,255,0.3))"></div>
<div class="a" style="left:523px;top:684px;width:55px;height:36px;border:1px solid rgba(80,90,110,0.55);border-radius:3px;background:linear-gradient(rgba(255,255,255,0.5),rgba(255,255,255,0.2) 45%,rgba(255,255,255,0.3))"></div>
<div class="a" style="left:581px;top:684px;width:56px;height:36px;border:1px solid rgba(80,90,110,0.55);border-radius:3px;background:linear-gradient(rgba(255,255,255,0.5),rgba(255,255,255,0.2) 45%,rgba(255,255,255,0.3))"></div>
<svg style="left:10px;top:684px" width="36" height="36" viewBox="0 0 36 36"><defs><radialGradient id="orb" cx="50%" cy="40%" r="60%"><stop offset="0" stop-color="#70c8f0"/><stop offset="0.55" stop-color="#1a6aa8"/><stop offset="1" stop-color="#0a2a50"/></radialGradient></defs><circle cx="18" cy="18" r="16.5" fill="url(#orb)" stroke="#2a4a6a" stroke-width="1"/><ellipse cx="18" cy="10" rx="13" ry="7" fill="rgba(255,255,255,0.25)"/><path d="M9 10q4-2 8 0v6.5q-4-2-8 0z" fill="#f06030"/><path d="M19 10q4-2 8 0v6.5q-4-2-8 0z" fill="#88c040"/><path d="M9 18.5q4-2 8 0v6.5q-4-2-8 0z" fill="#30a8f0"/><path d="M19 18.5q4-2 8 0v6.5q-4-2-8 0z" fill="#ffc828"/></svg>
<svg style="left:70px;top:686px" width="32" height="32" viewBox="0 0 32 32"><path d="M24.5 20A9.5 9.5 0 1 1 25 14.5H9" fill="none" stroke="#28b0ee" stroke-width="5"/><path d="M8 15.5h16" stroke="#28b0ee" stroke-width="3"/><path d="M5 29q-8-8 8-18q14-9 16-4q1 3-3 7" fill="none" stroke="#f0c830" stroke-width="2.4"/></svg>
<svg style="left:128px;top:686px" width="32" height="32" viewBox="0 0 32 32"><path d="M2 4h9l2 2h16v22H2z" fill="#f0d890" stroke="#c8a860"/><rect x="5" y="2" width="21" height="8" fill="#fff" stroke="#bbb"/><circle cx="9" cy="4.5" r="1.6" fill="#30a030"/><circle cx="19" cy="4.5" r="1.6" fill="#e04020"/><circle cx="23" cy="6" r="1.3" fill="#3a80c0"/><rect x="2" y="9" width="27" height="19" fill="#f8e6a8" stroke="#d0b070"/><path d="M7 28v-9h17v9h-4v-5h-9v5z" fill="#5ab4ec" stroke="#3a90d0"/></svg>
<svg style="left:187px;top:687px" width="28" height="28" viewBox="0 0 28 28"><rect x="2" y="3" width="22" height="22" fill="#a8d0f0" stroke="#7ab0e0" rx="2"/><circle cx="13" cy="14" r="8" fill="#f07820"/><path d="M10 9.5v9l7.5-4.5z" fill="#fff"/></svg>
<svg style="left:245px;top:686px" width="32" height="32" viewBox="0 0 32 32"><defs><radialGradient id="ffo" cx="40%" cy="65%" r="65%"><stop offset="0" stop-color="#ffb020"/><stop offset="0.6" stop-color="#f05a20"/><stop offset="1" stop-color="#e02a40"/></radialGradient></defs><circle cx="16" cy="16" r="13" fill="url(#ffo)"/><circle cx="17" cy="14" r="6.5" fill="#4a3ac8"/><path d="M9 6q6-5 13-1q7 5 6 13q-1-6-6-8q3 5-1 9q-5 3-8-2q3 1 5-1q-5-1-4-5" fill="#ffd030"/><path d="M4 14q0 12 12 14q8 0 11-7q-6 5-13 2q-7-4-5-12z" fill="#f04a20"/></svg>
<svg style="left:303px;top:687px" width="30" height="30" viewBox="0 0 30 30"><defs><linearGradient id="s7g" x1="0" y1="0" x2="1" y2="1"><stop offset="0" stop-color="#c8c8c8"/><stop offset="1" stop-color="#a0a0a0"/></linearGradient></defs><rect x="1" y="1" width="28" height="28" rx="1.5" fill="url(#s7g)" stroke="#444"/><path d="M18 5q5-1 4 4q-2 5-6 7q-4 3-7 5q-3 1-3-2q1-3 4-5q4-3 8-9z" fill="#111"/><path d="M5 20q-1 2 1 3 2 0 3-2z" fill="#111"/><path d="M17 15h7l-3 12" fill="none" stroke="#30d8e0" stroke-width="3.2"/></svg>
<svg style="left:362px;top:687px" width="30" height="30" viewBox="0 0 30 30"><rect x="1" y="1" width="28" height="28" fill="#d8d8d8" stroke="#555"/><path d="M4 6v12M4 9h5M9 6v6M12 6v6M12 9h8M20 9a2 2 0 1 0 4 0a2 2 0 1 0-4 0M4 15h5M9 12v6M12 12v6M12 15h4M5 22h8M5 25h8" stroke="#222" stroke-width="1" fill="none"/><path d="M17 17l10 10" stroke="#d04010" stroke-width="3"/><path d="M16 16l3 1-2 2z" fill="#222"/></svg>
<svg style="left:420px;top:686px" width="30" height="30" viewBox="0 0 30 30"><path d="M4 4q-4 5 0 10q-4 6 0 12q6 4 11 1q6 3 11-1q3-6 0-12q3-6 0-10q-5-4-11-1q-5-3-11 1z" fill="#fff" stroke="#333"/><rect x="7" y="8" width="16" height="14" fill="#3a4a4a" stroke="#111"/><rect x="13" y="9" width="5" height="12" fill="#30b0b0"/><path d="M7 15h16" stroke="#888"/></svg>
<svg style="left:478px;top:687px" width="30" height="30" viewBox="0 0 30 30"><rect x="1" y="1" width="28" height="28" fill="#b8b8b8" stroke="#555"/><path d="M12 6h14v10H12z" fill="#e8f4f8" stroke="#333"/><path d="M4 14l4-4h10v9H8z" fill="#e8f8f4" stroke="#333"/><path d="M6 6l4 4" stroke="#333"/><path d="M16 18l9 9" stroke="#e06010" stroke-width="3"/><path d="M15 17l3 1-2 2z" fill="#111"/></svg>
<svg style="left:536px;top:686px" width="30" height="30" viewBox="0 0 30 30"><path d="M5 20q-2-16 10-16q12 0 10 16" fill="none" stroke="#1a3ad0" stroke-width="3.5"/><rect x="2" y="17" width="6" height="10" rx="2" fill="#1a3ad0"/><rect x="22" y="17" width="6" height="10" rx="2" fill="#1a3ad0"/><ellipse cx="15" cy="20" rx="7" ry="7" fill="#f8a020"/><path d="M8 20h14" stroke="#e02010" stroke-width="2"/></svg>
<svg style="left:594px;top:686px" width="30" height="30" viewBox="0 0 30 30"><circle cx="15" cy="15" r="13" fill="#fff" stroke="#ccc"/><circle cx="15" cy="15" r="11" fill="#111"/><circle cx="15" cy="15" r="7" fill="#e01010"/><path d="M19 19h9v9h-9z" fill="#2a80d0"/><path d="M19 19h4.5v4.5H19zM23.5 23.5H28V28h-4.5z" fill="#f8d020"/></svg>
<svg style="left:1086px;top:696px" width="8" height="6" viewBox="0 0 8 6"><path d="M0 5h8L4 0z" fill="#fff"/></svg>
<svg style="left:1107px;top:692px" width="16" height="14" viewBox="0 0 16 14"><path d="M2 1v13" stroke="#fff" stroke-width="1.5"/><path d="M3 2h6l1 2h5v6H9l-1-2H3z" fill="#fff"/></svg>
<svg style="left:1131px;top:691px" width="14" height="16" viewBox="0 0 14 16"><rect x="2" y="4" width="10" height="11" fill="#eee" stroke="#333"/><path d="M5 1v4M9 1v4" stroke="#333" stroke-width="1.5"/><rect x="4" y="8" width="6" height="5" fill="#fff" stroke="#555"/></svg>
<svg style="left:1153px;top:694px" width="14" height="12" viewBox="0 0 14 12"><path d="M1.5 11V9.5M4.5 11V8M7.5 11V6M10.5 11V3.5M13 11V1" stroke="#fff" stroke-width="1.8"/></svg>
<svg style="left:1176px;top:692px" width="16" height="14" viewBox="0 0 16 14"><path d="M1 5h3l4-4v12l-4-4H1z" fill="#fff" stroke="#333" stroke-width="0.8"/><path d="M10 4q2 3 0 6M12 2q3 5 0 10" fill="none" stroke="#fff" stroke-width="1.2"/></svg>
<div class="a s" style="left:1209px;top:688px;font-size:11.5px;color:#fff;text-shadow:0 0 2px #333">10:26 AM</div>
<div class="a s" style="left:1206px;top:703px;font-size:11.8px;color:#fff;text-shadow:0 0 2px #333">06-Mar-19</div>
<div class="a s" style="left:516px;top:4px;font-size:21px;font-weight:bold;color:#f4f6f8;text-shadow:0 0 2px #1e2a36,0 0 3px #1e2a36,1px 1px 2px #1e2a36;transform-origin:0 0;transform:scaleX(1.125)">www.BANDICAM.com</div>
<div class="a" style="left:0px;top:0px;width:2px;height:683px;background:#111"></div>
<div class="a" style="left:2px;top:0px;width:1px;height:683px;background:#666"></div>
<div class="a" style="left:1277px;top:0px;width:3px;height:683px;background:#111"></div>
</body></html>
